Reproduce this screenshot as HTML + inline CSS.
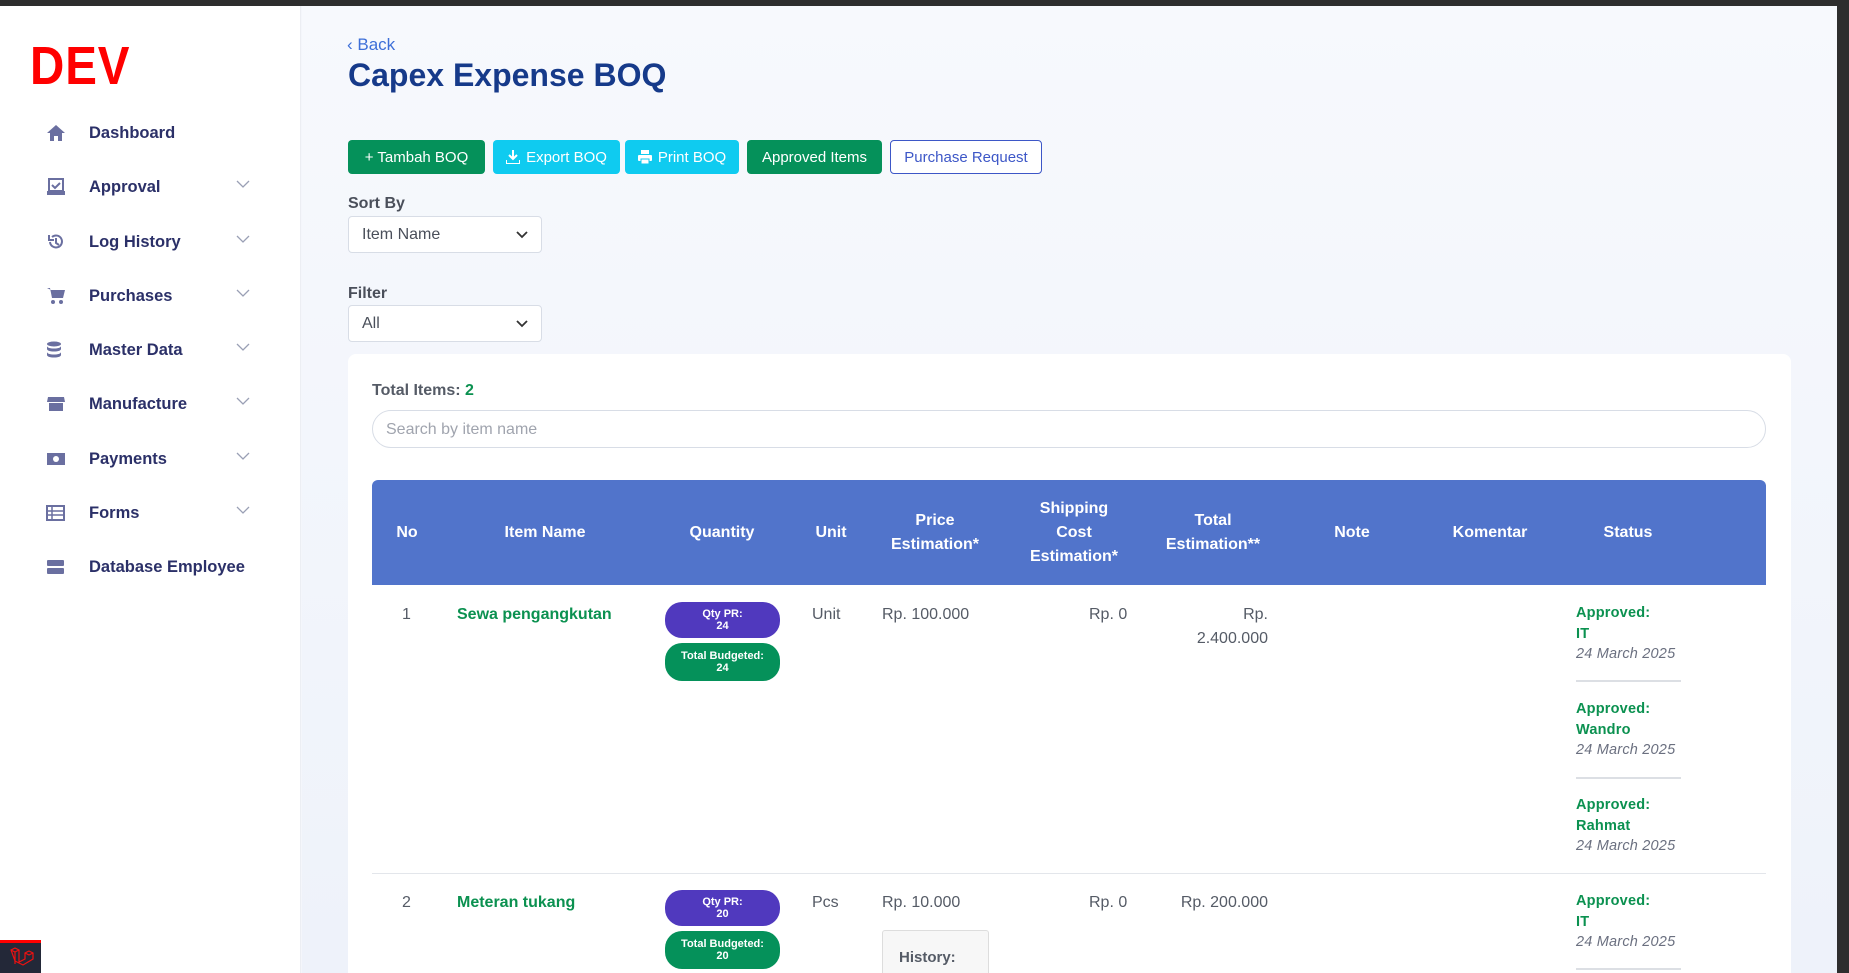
<!DOCTYPE html>
<html style="width:1849px;height:973px;overflow:hidden"><head><meta charset="utf-8"><style>
*{box-sizing:border-box;margin:0;padding:0}
body{width:1849px;height:973px;overflow:hidden;font-family:"Liberation Sans",sans-serif;background:#f4f6fb;position:relative}
.top{position:absolute;left:0;top:0;width:1849px;height:6px;background:#2e2e2e}
.scroll{position:absolute;right:0;top:0;width:12px;height:973px;background:#2e2e2e}
.side{position:absolute;left:0;top:6px;width:301px;height:967px;background:#fff;border-right:1px solid #eceef3}
.dev{position:absolute;left:30px;top:29px;font-size:54px;font-weight:bold;color:#f00;letter-spacing:1px;transform:scaleX(.88);transform-origin:left}
.nav{position:absolute;left:0;width:301px;height:30px}
.nav .ic{position:absolute;left:46px;top:6px;width:20px;height:18px}
.nav .t{position:absolute;left:89px;top:6px;font-size:16.5px;font-weight:bold;color:#2b3068}
.nav .ch{position:absolute;left:236px;top:7px;width:14px;height:10px}
.main{position:absolute;left:302px;top:6px;right:12px;bottom:0;background:linear-gradient(180deg,#f7f9fd,#eef2fa)}
.abs{position:absolute}
.btn{position:absolute;top:140px;height:34px;border-radius:4px;color:#fff;font-size:15px;display:flex;align-items:center;justify-content:center;gap:6px}
.lbl{position:absolute;left:348px;font-size:16px;font-weight:bold;color:#4a4f5a}
.sel{position:absolute;left:348px;width:194px;height:37px;background:#fff;border:1px solid #d8dde6;border-radius:4px;font-size:16px;color:#4a4f5a;padding:9px 13px}
.sel svg{position:absolute;right:13px;top:14px}
.card{position:absolute;left:348px;top:354px;width:1443px;height:619px;background:#fff;border-radius:8px 8px 0 0}
.th{position:absolute;top:480px;height:105px;left:372px;width:1394px;background:#5174cb;border-radius:6px 6px 0 0}
.h{position:absolute;color:#fff;font-weight:bold;font-size:16px;text-align:center;line-height:24px;transform:translate(-50%,-50%);top:533px;white-space:nowrap}
.c{position:absolute;font-size:16px;color:#555b66}
.g{color:#0b9150;font-weight:bold}
.bq{position:absolute;left:665px;width:115px;border-radius:17px;color:#fff;font-weight:bold;font-size:11px;text-align:center;line-height:12px;display:flex;flex-direction:column;justify-content:center}
.st{position:absolute;left:1576px;font-size:14.5px;line-height:20.5px;letter-spacing:.2px}
.st b{color:#0b9150;display:block}
.st i{color:#6b7080;display:block}
.dv{position:absolute;left:1576px;width:105px;height:2px;background:#dcdfe4}
</style></head><body>
<div class="top"></div>
<div class="side">
<div class="dev">DEV</div>
</div>
<div class="main"></div>

<div class="nav" style="top:118px"><svg class="ic" viewBox="0 0 20 18"><path d="M10 1 1 9h3v8h4v-5h4v5h4V9h3z" fill="#6a6fa0"/></svg><span class="t">Dashboard</span></div>
<div class="nav" style="top:172px"><svg class="ic" viewBox="0 0 20 18"><rect x="3" y="1" width="14" height="12" fill="none" stroke="#6a6fa0" stroke-width="2"/><path d="M6 7l3 3 5-5" stroke="#6a6fa0" stroke-width="2" fill="none"/><rect x="1" y="13" width="18" height="4" fill="#6a6fa0"/></svg><span class="t">Approval</span><svg class="ch" viewBox="0 0 14 10"><path d="M1 2l6 6 6-6" stroke="#9aa0b5" fill="none" stroke-width="1.3"/></svg></div>
<div class="nav" style="top:227px"><svg class="ic" viewBox="0 0 20 18"><path d="M4 9a6 6 0 1 0 2-5" stroke="#6a6fa0" stroke-width="2" fill="none"/><path d="M3 2v5h5" fill="none" stroke="#6a6fa0" stroke-width="2"/><path d="M10 5v5l3 2" stroke="#6a6fa0" stroke-width="2" fill="none"/></svg><span class="t">Log History</span><svg class="ch" viewBox="0 0 14 10"><path d="M1 2l6 6 6-6" stroke="#9aa0b5" fill="none" stroke-width="1.3"/></svg></div>
<div class="nav" style="top:281px"><svg class="ic" viewBox="0 0 20 18"><path d="M1 1h3l2 10h11l2-8H5" fill="#6a6fa0"/><circle cx="7" cy="15" r="2" fill="#6a6fa0"/><circle cx="15" cy="15" r="2" fill="#6a6fa0"/></svg><span class="t">Purchases</span><svg class="ch" viewBox="0 0 14 10"><path d="M1 2l6 6 6-6" stroke="#9aa0b5" fill="none" stroke-width="1.3"/></svg></div>
<div class="nav" style="top:335px"><svg class="ic" viewBox="0 0 20 18"><ellipse cx="8" cy="3" rx="7" ry="2.5" fill="#6a6fa0"/><path d="M1 5v3c0 1.5 3 2.5 7 2.5S15 9.5 15 8V5c0 1.5-3 2.5-7 2.5S1 6.5 1 5zM1 11v3c0 1.5 3 2.5 7 2.5s7-1 7-2.5v-3c0 1.5-3 2.5-7 2.5S1 12.5 1 11z" fill="#6a6fa0"/></svg><span class="t">Master Data</span><svg class="ch" viewBox="0 0 14 10"><path d="M1 2l6 6 6-6" stroke="#9aa0b5" fill="none" stroke-width="1.3"/></svg></div>
<div class="nav" style="top:389px"><svg class="ic" viewBox="0 0 20 18"><path d="M2 2h16l1 5H1z" fill="#6a6fa0"/><rect x="3" y="8" width="14" height="8" fill="#6a6fa0"/></svg><span class="t">Manufacture</span><svg class="ch" viewBox="0 0 14 10"><path d="M1 2l6 6 6-6" stroke="#9aa0b5" fill="none" stroke-width="1.3"/></svg></div>
<div class="nav" style="top:444px"><svg class="ic" viewBox="0 0 20 18"><rect x="1" y="3" width="18" height="12" fill="#6a6fa0"/><circle cx="10" cy="9" r="3" fill="#fff"/></svg><span class="t">Payments</span><svg class="ch" viewBox="0 0 14 10"><path d="M1 2l6 6 6-6" stroke="#9aa0b5" fill="none" stroke-width="1.3"/></svg></div>
<div class="nav" style="top:498px"><svg class="ic" viewBox="0 0 20 18"><rect x="1" y="2" width="17" height="14" fill="none" stroke="#6a6fa0" stroke-width="2"/><path d="M1 7h17M1 11h17M6 2v14" stroke="#6a6fa0" stroke-width="1.5"/></svg><span class="t">Forms</span><svg class="ch" viewBox="0 0 14 10"><path d="M1 2l6 6 6-6" stroke="#9aa0b5" fill="none" stroke-width="1.3"/></svg></div>
<div class="nav" style="top:552px"><svg class="ic" viewBox="0 0 20 18"><rect x="1" y="2" width="17" height="6" rx="1" fill="#6a6fa0"/><rect x="1" y="10" width="17" height="6" rx="1" fill="#6a6fa0"/></svg><span class="t">Database Employee</span></div>

<div class="abs" style="left:0;top:940px;width:41px;height:33px;background:#232838;border-top:3px solid #f00"><svg width="30" height="26" viewBox="0 0 30 26" style="margin:2px 6px"><path d="M5 5l4-2 4 2v12l6-3V8l4-2 4 2v6l-10 6-8-4zM19 8l4 2 4-2M5 5l4 2 4-2M9 7v12" fill="none" stroke="#e11" stroke-width="1.2"/></svg></div>

<div class="abs" style="left:347px;top:35px;font-size:17px;color:#3d6fd8">‹ Back</div>
<div class="abs" style="left:348px;top:57px;font-size:32px;font-weight:bold;color:#163a8a">Capex Expense BOQ</div>

<div class="btn" style="left:348px;width:137px;background:#05915a">+ Tambah BOQ</div>
<div class="btn" style="left:493px;width:127px;background:#0fcbf0"><svg width="14" height="14" viewBox="0 0 14 14"><path d="M7 0v8M3 5l4 4 4-4M0 10v4h14v-4" stroke="#fff" stroke-width="2" fill="none"/></svg>Export BOQ</div>
<div class="btn" style="left:625px;width:114px;background:#0fcbf0"><svg width="14" height="14" viewBox="0 0 14 14"><rect x="3" y="0" width="8" height="4" fill="#fff"/><rect x="0" y="5" width="14" height="6" rx="1" fill="#fff"/><rect x="3" y="9" width="8" height="5" fill="#fff" stroke="#0fcbf0"/></svg>Print BOQ</div>
<div class="btn" style="left:747px;width:135px;background:#05915a">Approved Items</div>
<div class="btn" style="left:890px;width:152px;background:#fff;border:1px solid #3d57c7;color:#3d57c7">Purchase Request</div>

<div class="lbl" style="top:195px">Sort By</div>
<div class="sel" style="top:216px">Item Name<svg width="12" height="8" viewBox="0 0 12 8"><path d="M1 1l5 5 5-5" stroke="#333" stroke-width="1.8" fill="none"/></svg></div>
<div class="lbl" style="top:285px">Filter</div>
<div class="sel" style="top:305px">All<svg width="12" height="8" viewBox="0 0 12 8"><path d="M1 1l5 5 5-5" stroke="#333" stroke-width="1.8" fill="none"/></svg></div>

<div class="card"></div>
<div class="abs" style="left:372px;top:382px;font-size:16px;font-weight:bold;color:#555b66">Total Items: <span style="color:#0b9150">2</span></div>
<div class="abs" style="left:372px;top:410px;width:1394px;height:38px;border:1px solid #d8dde6;border-radius:19px;font-size:16px;color:#a0a4ae;padding:10px 13px">Search by item name</div>

<div class="th"></div>
<div class="h" style="left:407px">No</div>
<div class="h" style="left:545px">Item Name</div>
<div class="h" style="left:722px">Quantity</div>
<div class="h" style="left:831px">Unit</div>
<div class="h" style="left:935px">Price<br>Estimation*</div>
<div class="h" style="left:1074px">Shipping<br>Cost<br>Estimation*</div>
<div class="h" style="left:1213px">Total<br>Estimation**</div>
<div class="h" style="left:1352px">Note</div>
<div class="h" style="left:1490px">Komentar</div>
<div class="h" style="left:1628px">Status</div>

<div class="c" style="left:402px;top:606px">1</div>
<div class="c g" style="left:457px;top:606px">Sewa pengangkutan</div>
<div class="bq" style="top:602px;height:36px;background:#5039be">Qty PR:<br>24</div>
<div class="bq" style="top:643px;height:38px;background:#05915a">Total Budgeted:<br>24</div>
<div class="c" style="left:812px;top:606px">Unit</div>
<div class="c" style="left:882px;top:606px">Rp. 100.000</div>
<div class="c" style="left:1089px;top:606px">Rp. 0</div>
<div class="c" style="left:1174px;width:94px;text-align:right;line-height:24px;top:603px">Rp.<br>2.400.000</div>
<div class="st" style="top:603px"><b>Approved:</b><b>IT</b><i>24 March 2025</i></div>
<div class="dv" style="top:680px"></div>
<div class="st" style="top:699px"><b>Approved:</b><b>Wandro</b><i>24 March 2025</i></div>
<div class="dv" style="top:777px"></div>
<div class="st" style="top:795px"><b>Approved:</b><b>Rahmat</b><i>24 March 2025</i></div>
<div class="abs" style="left:372px;top:873px;width:1394px;height:1px;background:#e3e6eb"></div>

<div class="c" style="left:402px;top:894px">2</div>
<div class="c g" style="left:457px;top:894px">Meteran tukang</div>
<div class="bq" style="top:890px;height:36px;background:#5039be">Qty PR:<br>20</div>
<div class="bq" style="top:931px;height:38px;background:#05915a">Total Budgeted:<br>20</div>
<div class="c" style="left:812px;top:894px">Pcs</div>
<div class="c" style="left:882px;top:894px">Rp. 10.000</div>
<div class="c" style="left:1089px;top:894px">Rp. 0</div>
<div class="c" style="left:1174px;top:894px;width:94px;text-align:right">Rp. 200.000</div>
<div class="abs" style="left:882px;top:930px;width:107px;height:60px;background:#f7f7f7;border:1px solid #ddd;border-radius:3px;padding:18px 16px;font-size:15px;font-weight:bold;color:#555b66">History:</div>
<div class="st" style="top:891px"><b>Approved:</b><b>IT</b><i>24 March 2025</i></div>
<div class="dv" style="top:968px"></div>

<div class="scroll"></div>
</body></html>
